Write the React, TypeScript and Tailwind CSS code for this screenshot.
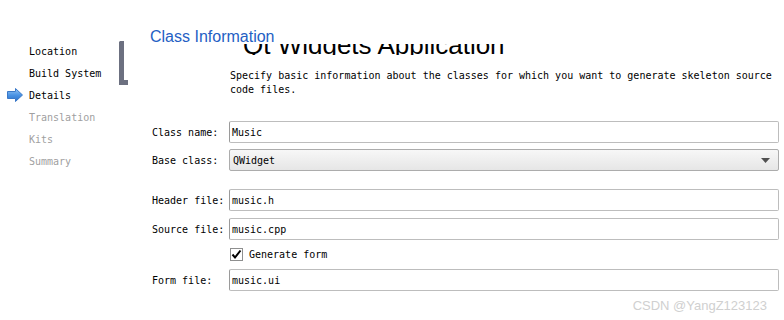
const mono = "font-['DejaVu_Sans_Mono','Liberation_Mono',monospace] text-[10px]";

const steps = [
  { label: 'Location', active: true },
  { label: 'Build System', active: true },
  { label: 'Details', active: true, current: true },
  { label: 'Translation', active: false },
  { label: 'Kits', active: false },
  { label: 'Summary', active: false },
];

const CurrentArrow = () => (
  <svg width="16" height="14" viewBox="0 0 16 14">
    <defs>
      <linearGradient id="arrowFill" x1="0" y1="0" x2="0" y2="1">
        <stop offset="0" stopColor="#9cc8f4" />
        <stop offset="0.5" stopColor="#4b94e4" />
        <stop offset="1" stopColor="#2c6fc8" />
      </linearGradient>
    </defs>
    <path
      d="M0.5 3.5 H8.5 V0.5 L15.5 7 L8.5 13.5 V10.5 H0.5 Z"
      fill="url(#arrowFill)"
      stroke="#3a78c8"
      strokeWidth="1"
      strokeLinejoin="round"
    />
  </svg>
);

const Field = ({ label, value }: { label: string; value: string }) => (
  <div className="flex items-center h-[22px]">
    <div className={`${mono} w-[79px] pl-[2px] text-black`}>{label}</div>
    <div
      className={`${mono} flex-1 h-[22px] flex items-center pl-[2px] border border-[#bdbdbd] border-l-[#9a9a9a] rounded-[2px] bg-white text-black`}
    >
      {value}
    </div>
  </div>
);

export default function App() {
  return (
    <div className="relative w-[784px] h-[320px] bg-white overflow-hidden flex">
      {/* wizard steps */}
      <div className="w-[150px] shrink-0 flex">
        <div className="w-[119px] pt-[40px]">
          {steps.map((s) => (
            <div key={s.label} className="flex items-center h-[22px]">
              <div className="w-[29px] shrink-0 pl-[7px] flex items-center">
                {s.current ? <CurrentArrow /> : null}
              </div>
              <span
                className={`${mono} ${s.active ? 'text-black' : 'text-[#a0a0a0]'}`}
              >
                {s.label}
              </span>
            </div>
          ))}
        </div>
        <svg className="mt-[41px]" width="10" height="46" viewBox="0 0 10 46">
          <path d="M0 1 L1 0 H5 V39 H9 V44 H0 Z" fill="#6c7080" />
        </svg>
      </div>

      {/* page content */}
      <div className="flex-1 pr-[5px] pt-[27px]">
        <div className="h-[17px] text-[16px] leading-[20px] text-[#2460c4] font-['Liberation_Sans',sans-serif]">
          Class Information
        </div>
        {/* page heading scrolled mostly out of view */}
        <div className="h-[11px] overflow-hidden pl-[93px]">
          <div className="relative -top-[12px] text-[26px] leading-[26px] text-black font-['Liberation_Sans',sans-serif] whitespace-nowrap">
            Qt Widgets Application
          </div>
        </div>
        <p className={`${mono} mt-[14px] pl-[80px] leading-[14px] text-black`}>
          Specify basic information about the classes for which you want to generate skeleton source
          <br />
          code files.
        </p>

        <div className="mt-[24px] flex flex-col">
          <Field label="Class name:" value="Music" />
          <div className="flex items-center h-[22px] mt-[6px]">
            <div className={`${mono} w-[79px] pl-[2px] text-black`}>Base class:</div>
            <div
              className={`${mono} flex-1 h-[22px] flex items-center justify-between pl-[3px] pr-[8px] border border-[#acacac] rounded-[2px] bg-gradient-to-b from-[#f7f7f7] to-[#e6e6e6] text-black`}
            >
              <span>QWidget</span>
              <svg width="9" height="5" viewBox="0 0 9 5">
                <path d="M0 0 H9 L4.5 5 Z" fill="#505050" />
              </svg>
            </div>
          </div>
          <div className="mt-[18px]">
            <Field label="Header file:" value="music.h" />
          </div>
          <div className="mt-[7px]">
            <Field label="Source file:" value="music.cpp" />
          </div>
          <div className="h-[29px] flex items-center pl-[80px]">
            <div className="w-[13px] h-[13px] border border-[#8e8f8f] bg-white flex items-center justify-center">
              <svg width="11" height="11" viewBox="0 0 11 11">
                <path
                  d="M1.5 5.5 L4 8.5 L9.5 1.5"
                  fill="none"
                  stroke="#000"
                  strokeWidth="2"
                />
              </svg>
            </div>
            <span className={`${mono} ml-[6px] text-black`}>Generate form</span>
          </div>
          <Field label="Form file:" value="music.ui" />
        </div>
      </div>

      {/* watermark */}
      <div className="absolute right-[17px] bottom-[6px] text-[13px] leading-[16px] text-[#d0d0d0] font-['Liberation_Sans',sans-serif]">
        CSDN @YangZ123123
      </div>
    </div>
  );
}
